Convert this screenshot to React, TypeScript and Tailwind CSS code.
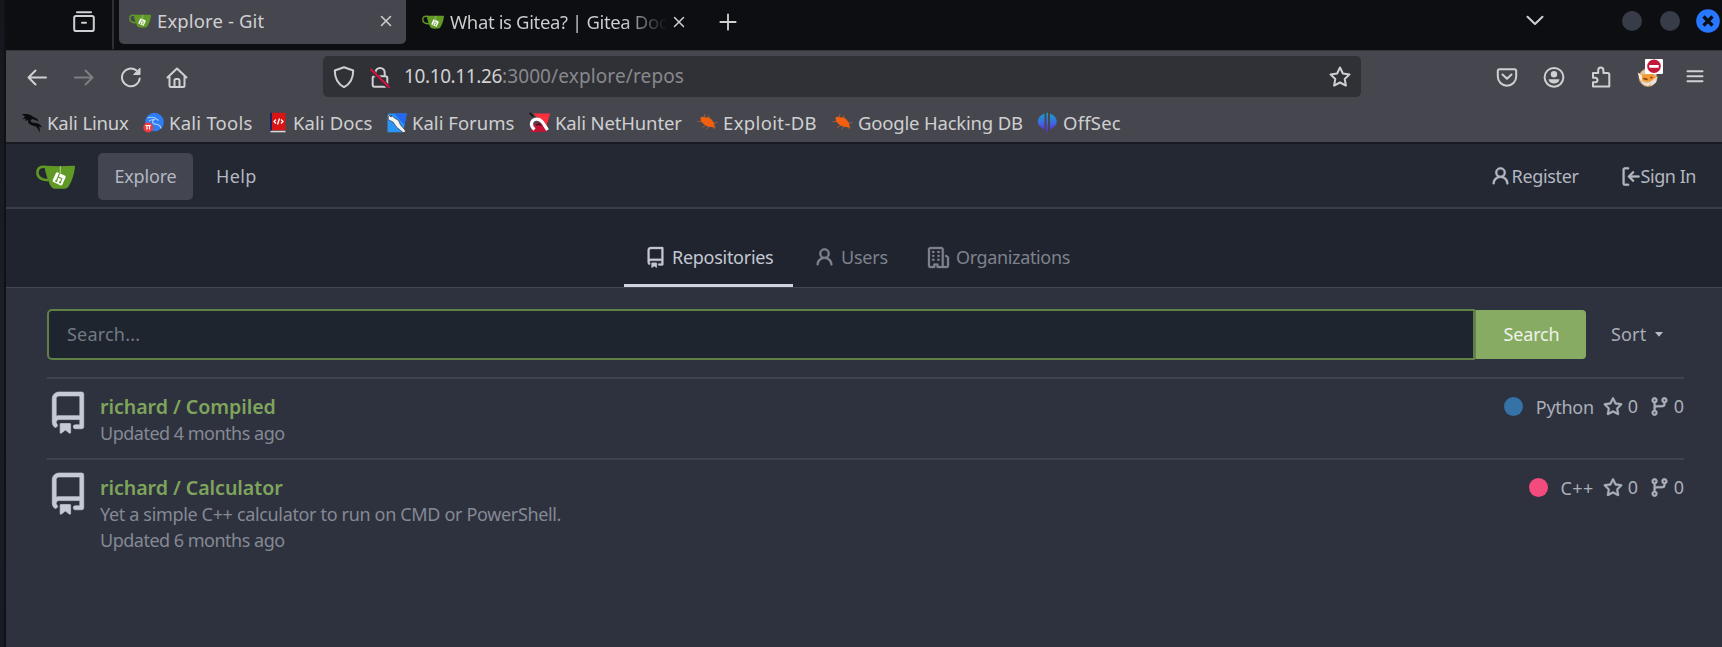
import type { ReactNode } from "react";

const octicons = {
  repo: "M2 2.5A2.5 2.5 0 0 1 4.5 0h8.75a.75.75 0 0 1 .75.75v12.5a.75.75 0 0 1-.75.75h-2.5a.75.75 0 0 1 0-1.5h1.75v-2h-8a1 1 0 0 0-.714 1.7.75.75 0 1 1-1.072 1.05A2.495 2.495 0 0 1 2 11.5Zm10.5-1h-8a1 1 0 0 0-1 1v6.708A2.486 2.486 0 0 1 4.5 9h8ZM5 12.25a.25.25 0 0 1 .25-.25h3.5a.25.25 0 0 1 .25.25v3.25a.25.25 0 0 1-.4.2l-1.45-1.087a.249.249 0 0 0-.3 0L5.4 15.7a.25.25 0 0 1-.4-.2Z",
  person:
    "M10.561 8.073a6.005 6.005 0 0 1 3.432 5.142.75.75 0 1 1-1.498.07 4.5 4.5 0 0 0-8.99 0 .75.75 0 0 1-1.498-.07 6.004 6.004 0 0 1 3.431-5.142 3.999 3.999 0 1 1 5.123 0ZM10.5 5a2.5 2.5 0 1 0-5 0 2.5 2.5 0 0 0 5 0Z",
  organization:
    "M1.75 16A1.75 1.75 0 0 1 0 14.25V1.75C0 .784.784 0 1.75 0h8.5C11.216 0 12 .784 12 1.75v12.5c0 .085-.006.168-.018.25h2.268a.25.25 0 0 0 .25-.25V8.285a.25.25 0 0 0-.111-.208l-1.055-.703a.749.749 0 1 1 .832-1.248l1.055.703c.487.325.779.871.779 1.456v5.965A1.75 1.75 0 0 1 14.25 16h-3.5a.766.766 0 0 1-.197-.026c-.099.017-.2.026-.303.026h-3a.75.75 0 0 1-.75-.75V14h-1v1.25a.75.75 0 0 1-.75.75Zm-.25-1.75c0 .138.112.25.25.25H4v-1.25a.75.75 0 0 1 .75-.75h2.5a.75.75 0 0 1 .75.75v1.25h2.25a.25.25 0 0 0 .25-.25V1.75a.25.25 0 0 0-.25-.25h-8.5a.25.25 0 0 0-.25.25ZM3.75 6h.5a.75.75 0 0 1 0 1.5h-.5a.75.75 0 0 1 0-1.5ZM3 3.75A.75.75 0 0 1 3.75 3h.5a.75.75 0 0 1 0 1.5h-.5A.75.75 0 0 1 3 3.75Zm4 3A.75.75 0 0 1 7.75 6h.5a.75.75 0 0 1 0 1.5h-.5A.75.75 0 0 1 7 6.75ZM7.75 3h.5a.75.75 0 0 1 0 1.5h-.5a.75.75 0 0 1 0-1.5ZM3 9.75A.75.75 0 0 1 3.75 9h.5a.75.75 0 0 1 0 1.5h-.5A.75.75 0 0 1 3 9.75ZM7.75 9h.5a.75.75 0 0 1 0 1.5h-.5a.75.75 0 0 1 0-1.5Z",
  signIn:
    "M2 2.75C2 1.784 2.784 1 3.75 1h2.5a.75.75 0 0 1 0 1.5h-2.5a.25.25 0 0 0-.25.25v10.5c0 .138.112.25.25.25h2.5a.75.75 0 0 1 0 1.5h-2.5A1.75 1.75 0 0 1 2 13.25Zm6.56 4.5h5.69a.75.75 0 0 1 0 1.5H8.56l1.97 1.97a.749.749 0 0 1-.326 1.275.749.749 0 0 1-.734-.215L6.22 8.53a.75.75 0 0 1 0-1.06l3.25-3.25a.749.749 0 0 1 1.275.326.749.749 0 0 1-.215.734Z",
  star: "M8 .25a.75.75 0 0 1 .673.418l1.882 3.815 4.21.612a.75.75 0 0 1 .416 1.279l-3.046 2.97.719 4.192a.751.751 0 0 1-1.088.791L8 12.347l-3.766 1.98a.75.75 0 0 1-1.088-.79l.72-4.194L.818 6.374a.75.75 0 0 1 .416-1.28l4.21-.611L7.327.668A.75.75 0 0 1 8 .25Zm0 2.445L6.615 5.5a.75.75 0 0 1-.564.41l-3.097.45 2.24 2.184a.75.75 0 0 1 .216.664l-.528 3.084 2.769-1.456a.75.75 0 0 1 .698 0l2.77 1.456-.53-3.084a.75.75 0 0 1 .216-.664l2.24-2.183-3.096-.45a.75.75 0 0 1-.564-.41L8 2.694Z",
  branch:
    "M9.5 3.25a2.25 2.25 0 1 1 3 2.122V6A2.5 2.5 0 0 1 10 8.5H6a1 1 0 0 0-1 1v1.128a2.251 2.251 0 1 1-1.5 0V5.372a2.25 2.25 0 1 1 1.5 0v1.836A2.493 2.493 0 0 1 6 7h4a1 1 0 0 0 1-1v-.628A2.25 2.25 0 0 1 9.5 3.25Zm-6 0a.75.75 0 1 0 1.5 0 .75.75 0 0 0-1.5 0Zm8.25-.75a.75.75 0 1 0 0 1.5.75.75 0 0 0 0-1.5ZM4.25 12a.75.75 0 1 0 0 1.5.75.75 0 0 0 0-1.5Z",
};

function Octicon({ name, className }: { name: keyof typeof octicons; className: string }) {
  return (
    <svg
      viewBox="0 0 16 16"
      fill="currentColor"
      stroke="currentColor"
      strokeWidth=".25"
      className={`shrink-0 overflow-visible ${className}`}
    >
      <path d={octicons[name]} />
    </svg>
  );
}

function GiteaLogo({ className }: { className: string }) {
  return (
    <svg viewBox="0 0 39 24" className={`shrink-0 ${className}`}>
      <path d="M10.500 2.200C5 .8 1.400 2.800 1.400 7.500c0 4.800 3.600 7.500 11.200 7.600" fill="none" stroke="#609926" strokeWidth="2.500" />
      <path d="M8.500 .8c9 .5 20 .4 29 0 1.300-.1 1.700.6 1.400 2-.8 6.500-2.800 12.600-5.400 17.200-1.200 2.200-2.800 3.600-5 3.700-3.600.2-7 .2-9.600 0-2.200-.2-4-1.600-5-4C12 14.500 9 8 8.500 .8Z" fill="#609926" />
      <path d="M24.300 1v7" stroke="#c8dcb0" strokeWidth=".8" />
      <rect x="17.800" y="8.500" width="10.600" height="10.600" rx="1.600" fill="#fff" transform="rotate(25 23.100 13.800)" />
      <path d="m23.600 8.200-3.500 8.600M22.300 12l3.500 1.600-1.600 4" fill="none" stroke="#609926" strokeWidth="1.100" />
      <circle cx="20.300" cy="15.900" r="1.100" fill="#609926" />
      <circle cx="24.100" cy="17.300" r="1.100" fill="#609926" />
    </svg>
  );
}

function LineIcon({ children, className = "size-[22px]" }: { children: ReactNode; className?: string }) {
  return (
    <svg
      viewBox="0 0 22 22"
      fill="none"
      stroke="currentColor"
      strokeWidth="2"
      strokeLinecap="round"
      strokeLinejoin="round"
      className={`shrink-0 ${className}`}
    >
      {children}
    </svg>
  );
}

function ToolButton({ children, className = "" }: { children: ReactNode; className?: string }) {
  return <div className={`flex w-[47px] shrink-0 items-center justify-center ${className}`}>{children}</div>;
}

function CloseIcon() {
  return (
    <LineIcon className="size-[22px]">
      <path d="m6.500 6.500 9 9m0-9-9 9" strokeWidth="1.500" />
    </LineIcon>
  );
}

function TabStrip() {
  return (
    <div className="flex h-[50px] shrink-0 bg-[#0d0e12] text-[18.5px] text-[#d0d0d2]">
      <div className="flex h-[49px] w-[108px] shrink-0 items-center justify-end border-r-2 border-[#2f3036] pr-[17px] pb-[6px]">
        <LineIcon>
          <path d="M4 1.200h14M3 5h16a1.800 1.800 0 0 1 1.800 1.800v11.400A1.800 1.800 0 0 1 19 20H3a1.800 1.800 0 0 1-1.800-1.800V6.800A1.800 1.800 0 0 1 3 5Zm6 6.700h4" />
        </LineIcon>
      </div>
      <div className="ml-[5px] flex h-[44px] w-[287px] shrink-0 items-center rounded-b-[5px] bg-[#46474e] pr-[9px] pb-[2px] pl-[10px]">
        <GiteaLogo className="h-[14px] w-[22px]" />
        <span className="ml-[6px] grow tracking-[0.12px]">Explore - Git</span>
        <CloseIcon />
      </div>
      <div className="ml-[16px] flex h-[43px] shrink-0 items-center">
        <GiteaLogo className="h-[14px] w-[22px]" />
        <span className="ml-[6px] w-[218px] whitespace-nowrap bg-linear-to-r from-[#d0d0d2] from-80% to-[#0d0e12] bg-clip-text tracking-[-0.36px] text-transparent">
          What is Gitea? | Gitea Doc
        </span>
        <CloseIcon />
      </div>
      <div className="ml-[26px] flex h-[43px] items-center">
        <LineIcon className="size-[24px]">
          <path d="M11 4v14M4 11h14" strokeWidth="1.700" />
        </LineIcon>
      </div>
      <div className="ml-auto flex h-[42px] shrink-0 items-center pr-[2px]">
        <LineIcon className="mr-[76px] size-[22px]">
          <path d="m3.500 6.700 7.500 7.300 7.500-7.300" />
        </LineIcon>
        <div className="size-[20px] rounded-full bg-[#383c49]" />
        <div className="mr-[16px] ml-[18px] size-[20px] rounded-full bg-[#383c49]" />
        <svg viewBox="0 0 24 24" className="size-[24px]">
          <circle cx="12" cy="12" r="11.800" fill="#2777ff" />
          <path d="m7.500 7.500 9 9m0-9-9 9" stroke="#0d0e12" strokeWidth="3.200" />
        </svg>
      </div>
    </div>
  );
}

function Toolbar() {
  return (
    <div className="flex h-[52px] shrink-0 items-center border-t border-[#35363c] pr-[4px] pl-[7px] text-[#d0d0d2]">
      <ToolButton>
        <LineIcon>
          <path d="M20 11.500H2.500M9.500 4.500l-7 7 7 7" />
        </LineIcon>
      </ToolButton>
      <ToolButton className="text-[#7d7e83]">
        <LineIcon>
          <path d="M2 11.500h17.500M12.500 4.500l7 7-7 7" />
        </LineIcon>
      </ToolButton>
      <ToolButton>
        <LineIcon>
          <path d="M19.700 12.500A8.900 8.900 0 1 1 16.500 4.500" />
          <path d="M20 2.500v6h-6Z" fill="currentColor" strokeWidth="1" />
        </LineIcon>
      </ToolButton>
      <ToolButton className="-ml-px">
        <LineIcon>
          <path d="m1.500 11.500 9.500-9 9.500 9M3.500 10.500v9a1.500 1.500 0 0 0 1.500 1.500h12a1.500 1.500 0 0 0 1.500-1.500v-9M8.500 21v-6.500a1.500 1.500 0 0 1 1.500-1.500h2a1.500 1.500 0 0 1 1.500 1.500V21" />
        </LineIcon>
      </ToolButton>
      <div className="ml-[123px] flex h-[41px] w-[1038px] shrink-0 items-center rounded-[5px] bg-[#303136] px-[10px] text-[19px]">
        <LineIcon>
          <path d="M11 1.300 20.200 4.500c0 7.500-3 13.500-9.200 16.700C4.800 18 1.800 12 1.800 4.500Z" />
        </LineIcon>
        <LineIcon className="ml-[14px] size-[22px]">
          <path d="M5.500 10.200h11a1.800 1.800 0 0 1 1.800 1.800v7a1.800 1.800 0 0 1-1.800 1.800h-11A1.800 1.800 0 0 1 3.700 19v-7a1.800 1.800 0 0 1 1.800-1.800ZM6.500 9.500v-3a4.600 4.600 0 0 1 9.200 0v3" />
          <path d="m2 4 18 17.500" stroke="#303136" strokeWidth="4" />
          <path d="m2 3.500 18 17.500" stroke="#d4133f" />
        </LineIcon>
        <span className="ml-[13px] tracking-[-0.39px]">10.10.11.26</span>
        <span className="tracking-[0.12px] text-[#88898d]">:3000/explore/repos</span>
        <LineIcon className="ml-auto size-[22px]">
          <path d="m11 1.500 2.900 6 6.600.9-4.800 4.600 1.200 6.600-5.900-3.100-5.900 3.100 1.200-6.600L1.500 8.400l6.600-.9Z" />
        </LineIcon>
      </div>
      <div className="ml-auto flex items-center">
        <ToolButton>
          <LineIcon>
            <path d="M3.500 3.200h15A1.700 1.700 0 0 1 20.200 5v5.500a9.200 9.200 0 0 1-18.400 0V5a1.700 1.700 0 0 1 1.700-1.800ZM6.500 8.500l4.500 4.300 4.500-4.300" />
          </LineIcon>
        </ToolButton>
        <ToolButton>
          <LineIcon>
            <circle cx="11" cy="11.300" r="9.400" />
            <circle cx="11" cy="8.300" r="3.200" fill="currentColor" stroke="none" />
            <path d="M5.500 13.200h11c-.5 3-2.700 4.300-5.500 4.300s-5-1.300-5.500-4.300Z" fill="currentColor" stroke="none" />
          </LineIcon>
        </ToolButton>
        <ToolButton>
          <LineIcon>
            <path d="M3 7h5.200V4.200a2.600 2.600 0 0 1 5.200 0V7h4.400A1.500 1.500 0 0 1 19.300 8.500V20.500H3v-4.300h2.300a2.200 2.200 0 0 0 0-4.400H3Z" />
          </LineIcon>
        </ToolButton>
        <ToolButton>
          <div className="relative size-[22px]">
            <svg viewBox="0 0 22 22" className="size-[22px]">
              <circle cx="11" cy="11.500" r="9" fill="#dcc7ae" stroke="#b98a55" strokeWidth="1" />
              <path d="M.8 7 5 8.500l11-.5 3.500 3.500-3 3.500-7 1-5-2Z" fill="#f59a32" />
              <path d="M.8 6.500 5 9.500v5.500l-2.500-2Z" fill="#f6ede2" />
              <path d="m13.500 15.500 7-5-1.500 6-5 3.500Z" fill="#e7e0d8" />
              <path d="M4.500 15.500 9 17.500l5-1-3 3.500-4-1Z" fill="#f2e4d2" />
              <path d="m6.500 12.500 4 1m3-1.500 2-.8" stroke="#7a4312" strokeWidth="1.400" />
            </svg>
            <svg viewBox="0 0 18 15" className="absolute -top-[7px] left-[8px] h-[15px] w-[18px]">
              <rect width="18" height="15" rx="1" fill="#fff" />
              <circle cx="9" cy="7.300" r="6.800" fill="#c2183a" />
              <rect x="4.200" y="5.900" width="9.600" height="2.800" rx=".6" fill="#fff" />
            </svg>
          </div>
        </ToolButton>
        <ToolButton>
          <LineIcon>
            <path d="M3.500 5.200h15M3.500 10.200h15M3.500 15.200h15" />
          </LineIcon>
        </ToolButton>
      </div>
    </div>
  );
}

function BugIcon() {
  return (
    <svg viewBox="0 0 21 21" className="size-[21px] shrink-0">
      <path d="M.5 9.500h5M8 2l-1 4M12 3.500 11.500 7M20.500 10.500l-4 .5M5 15.500l3.500-2M9.500 17.500l2-2.500M18 17.500l-2-2" stroke="#b4602f" strokeWidth=".8" />
      <path d="m3.500 5.500 2-.8 2.500.6 3.500.2 2.500 1.500 2 2.500 1.500 2.500-.5 1.200 1.500 2-1 .6-2.500-.9-2.500.2-3.500-1.400-3-2.200-2-2.500Z" fill="#f2600f" />
    </svg>
  );
}

const bookmarks: { label: string; tracking: string; icon: ReactNode }[] = [
  {
    label: "Kali Linux",
    tracking: "tracking-[-0.16px]",
    icon: (
      <svg viewBox="0 0 21 21" className="size-[21px] shrink-0">
        <path d="M.5 2c3 .2 6-.6 9 1l4 2.500 3 1.500 1 2.500-3-1.500-3.500-1-1.500 1.500c.5 2 2.500 2.300 5 2.500 3.500.3 6 2.500 6.300 4.500L18 14.500c1 2 .8 4.500.2 6-.8-3.500-2-5.700-5-6.500-4.500-1-6.700-3-6.200-6L4 9l1-2.500-3.500 1L4 4.500Z" fill="#0b0c0e" />
      </svg>
    ),
  },
  {
    label: "Kali Tools",
    tracking: "tracking-[0.24px]",
    icon: (
      <svg viewBox="0 0 21 21" className="size-[21px] shrink-0">
        <circle cx="11.500" cy="10" r="9.300" fill="#2d7df5" />
        <path d="M4.500 6c4-1.500 8-.5 11 2.500M6 9c2-1.500 3.500-1.500 5-1.500-2.500 2-1.500 4.500 1.500 4.700 3 .2 5 1.300 5.500 4.300" fill="none" stroke="#a9cdfd" strokeWidth="1.200" />
        <circle cx="5.200" cy="15.500" r="5" fill="#f03a3e" />
        <path d="M2.500 13.500h5.400M4 13.500v4m2.500-4v4" stroke="#fff" strokeWidth="1.200" />
      </svg>
    ),
  },
  {
    label: "Kali Docs",
    tracking: "tracking-[0.09px]",
    icon: (
      <svg viewBox="0 0 21 21" className="size-[21px] shrink-0">
        <path d="M3 .8h3v18H3Z" fill="#1c2160" />
        <path d="M5 .8h13.500v17.500H5Z" fill="#d91414" />
        <path d="M3.500 18.800h15v1.500h-15Z" fill="#dcdcdc" />
        <path d="M9 7.500 7 9.500l2 2m5-4 2 2-2 2M12.500 6.500l-2 6" fill="none" stroke="#fff" strokeWidth="1.300" />
      </svg>
    ),
  },
  {
    label: "Kali Forums",
    tracking: "tracking-[0.02px]",
    icon: (
      <svg viewBox="0 0 21 21" className="size-[21px] shrink-0">
        <path d="M1.500 1.500h19.200l-3.500 18.700H1.500Z" fill="#2a94f7" />
        <path d="M8 1.500h12.700L18.500 13Z" fill="#2468f2" />
        <path d="m.5 1 2 4-.5 2.500L7 10l3.500 5 6.500 5.500 3-.5-1.500-2.500-4-4.500-2-4.500L8.500 6 5 3l.5 2L3 3.500Z" fill="#f4f4f4" stroke="#20242a" strokeWidth=".6" />
      </svg>
    ),
  },
  {
    label: "Kali NetHunter",
    tracking: "tracking-[-0.14px]",
    icon: (
      <svg viewBox="0 0 21 21" className="size-[21px] shrink-0">
        <path d="M4 1.500h17L17.500 14Z" fill="#ff2f3d" />
        <path d="M2 20V14l8-4 7.500 4v6Z" fill="#c01535" />
        <path d="m.5 1 4 3.500" stroke="#17181b" strokeWidth="1.800" />
        <path d="M5.500 17.500C1 14 1.500 8.500 6.500 7.200 12 6 14.500 11.500 18.500 18" fill="none" stroke="#fff" strokeWidth="3.200" />
        <path d="M7.500 13.500c1-2 3-1.800 4.500 0" fill="none" stroke="#2a1a22" strokeWidth="1.600" />
      </svg>
    ),
  },
  { label: "Exploit-DB", tracking: "tracking-[0.36px]", icon: <BugIcon /> },
  { label: "Google Hacking DB", tracking: "tracking-[-0.19px]", icon: <BugIcon /> },
  {
    label: "OffSec",
    tracking: "tracking-[0.2px]",
    icon: (
      <svg viewBox="0 0 21 21" className="size-[21px] shrink-0">
        <defs>
          <linearGradient id="offsec" gradientUnits="userSpaceOnUse" x1="0" y1="0" x2="0" y2="21">
            <stop offset="0" stopColor="#12a5c4" />
            <stop offset=".5" stopColor="#3c6be0" />
            <stop offset="1" stopColor="#6a1bd0" />
          </linearGradient>
        </defs>
        <g fill="url(#offsec)">
          <path d="M7.500 1.500V17.500C3.500 15.500 .8 13 .8 9.500S3.500 3 7.500 1.500Z" />
          <path d="M13 1.500V17.500c4-2 6.700-4.500 6.700-8S17 3 13 1.500Z" />
          <path d="M9.500.8h1.500v18.500l-.7 1.500-.8-1.500Z" />
        </g>
      </svg>
    ),
  },
];

function BookmarksBar() {
  return (
    <div className="grid h-[42px] shrink-0 grid-cols-[122px_124px_119px_143px_168px_135px_205px_auto] items-center border-b-2 border-[#191b22] pt-px pl-[15px] text-[18.5px] whitespace-nowrap text-[#cfcfd1]">
      {bookmarks.map(({ label, tracking, icon }) => (
        <div key={label} className="flex items-center gap-[5px]">
          {icon}
          <span className={tracking}>{label}</span>
        </div>
      ))}
    </div>
  );
}

function SiteNav() {
  return (
    <nav className="flex h-[65px] shrink-0 items-center border-b-2 border-[#3a3e4a] bg-[#242833] pt-[2px] pr-[26px] pl-[30px] text-[18px] text-[#b3b7c1]">
      <GiteaLogo className="h-[24px] w-[39px]" />
      <div className="ml-[23px] flex h-[47px] w-[95px] items-center justify-center rounded-[5px] bg-[#434651] tracking-[-0.16px]">
        Explore
      </div>
      <span className="ml-[23px] tracking-[0.4px]">Help</span>
      <div className="ml-auto flex items-center">
        <Octicon name="person" className="size-[21px]" />
        <span className="ml-px tracking-[-0.35px]">Register</span>
      </div>
      <div className="ml-[41px] flex items-center">
        <Octicon name="signIn" className="size-[21px]" />
        <span className="tracking-[-0.45px]">Sign In</span>
      </div>
    </nav>
  );
}

function ExploreTabs() {
  return (
    <div className="flex h-[79px] shrink-0 items-end border-b border-[#434753] bg-[#20242e] pl-[618px] text-[18px] text-[#7e828d]">
      <div className="flex h-[63px] w-[169px] shrink-0 items-center border-b-[3px] border-[#d0d3e0] pt-[6px] pl-[21px] text-[#c4c8d3]">
        <Octicon name="repo" className="size-[21px]" />
        <span className="ml-[6px] tracking-[-0.28px]">Repositories</span>
      </div>
      <div className="flex h-[63px] shrink-0 items-center pt-[3px] pl-[21px]">
        <Octicon name="person" className="size-[21px]" />
        <span className="ml-[6px] w-[87px] tracking-[-0.22px]">Users</span>
        <Octicon name="organization" className="size-[21px]" />
        <span className="ml-[7px] tracking-[-0.36px]">Organizations</span>
      </div>
    </div>
  );
}

function SearchRow() {
  return (
    <div className="flex h-[51px] items-center text-[18px]">
      <div className="flex h-[51px] w-[1428px] items-center rounded-l-[5px] border-2 border-[#5f8145] bg-[#1e252f] pb-px pl-[18px] tracking-[0.2px] text-[#737983]">
        Search...
      </div>
      <div className="flex h-[49px] w-[111px] items-center justify-center rounded-r-[4px] border-l border-[#6c7f5c] bg-[#87ab63] pb-px pl-px tracking-[-0.14px] text-[#eef2ea]">
        Search
      </div>
      <span className="ml-[25px] pb-px tracking-[0.15px] text-[#a9adb8]">Sort</span>
      <svg viewBox="0 0 8 5" className="ml-[9px] h-[5px] w-[8px]">
        <path d="M0 0h8L4 4.800Z" fill="#b7bbc5" />
      </svg>
    </div>
  );
}

interface Repo {
  name: string;
  description?: string;
  updated: string;
  language: string;
  dot: string;
  languageTracking: string;
}

const repos: Repo[] = [
  {
    name: "richard / Compiled",
    updated: "Updated 4 months ago",
    language: "Python",
    dot: "bg-[#3572a5]",
    languageTracking: "tracking-[-0.3px]",
  },
  {
    name: "richard / Calculator",
    description: "Yet a simple C++ calculator to run on CMD or PowerShell.",
    updated: "Updated 6 months ago",
    language: "C++",
    dot: "bg-[#f34b7d]",
    languageTracking: "tracking-[0.4px]",
  },
];

function RepoItem({ repo }: { repo: Repo }) {
  return (
    <div className="flex min-h-[81px] items-start border-t-2 border-[#3f434f] pt-[13px] text-[18px] leading-[26px] text-[#858994]">
      <Octicon name="repo" className="size-[42px] text-[#c6cad7]" />
      <div className="ml-[11px] grow">
        <div className="pt-px text-[19.6px] font-semibold leading-[27px] tracking-[-0.05px] text-[#7fa45c]">{repo.name}</div>
        {repo.description && <div className="tracking-[-0.34px]">{repo.description}</div>}
        <div className="tracking-[-0.5px]">{repo.updated}</div>
      </div>
      <div className="flex h-[29px] items-center text-[#abafba]">
        <span className={`size-[19px] rounded-full ${repo.dot}`} />
        <span className={`mr-[9px] ml-[13px] pt-px ${repo.languageTracking}`}>{repo.language}</span>
        <Octicon name="star" className="size-[20px]" />
        <span className="w-[26px] pb-px pl-[5px]">0</span>
        <Octicon name="branch" className="size-[21px]" />
        <span className="pb-px pl-[4px]">0</span>
      </div>
    </div>
  );
}

export default function App() {
  return (
    <div className="flex h-[647px] w-full overflow-hidden bg-[#2e323e] font-['Noto_Sans',sans-serif]">
      <div className="w-[6px] shrink-0 border-r-2 border-[#101116] bg-linear-to-b from-[#15171d] via-[#1c1f28] to-[#181b25]" />
      <div className="flex grow flex-col bg-[#46474e]">
        <TabStrip />
        <Toolbar />
        <BookmarksBar />
        <SiteNav />
        <ExploreTabs />
        <main className="grow bg-[#2e323e] pt-[21px] pr-[38px] pl-[41px]">
          <SearchRow />
          <div className="mt-[17px]">
            {repos.map((repo) => (
              <RepoItem key={repo.name} repo={repo} />
            ))}
          </div>
        </main>
      </div>
    </div>
  );
}
